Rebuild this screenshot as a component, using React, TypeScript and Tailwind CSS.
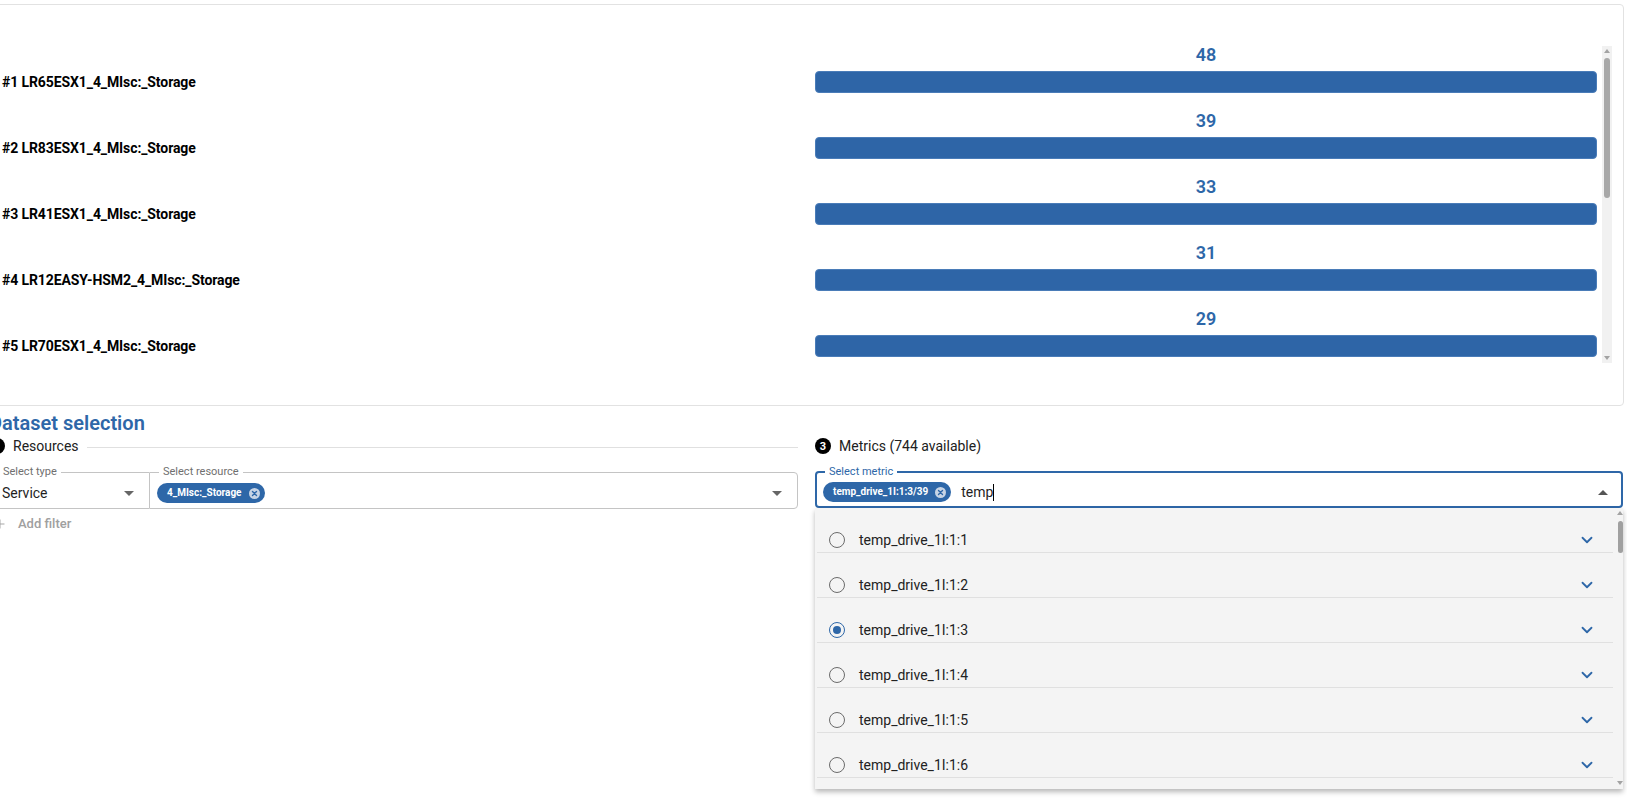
import { ChevronDown, Plus } from "lucide-react";

const BLUE = "#2e67a8";

const chartRows = [
  { name: "LR65ESX1_4_MIsc:_Storage", value: 48 },
  { name: "LR83ESX1_4_MIsc:_Storage", value: 39 },
  { name: "LR41ESX1_4_MIsc:_Storage", value: 33 },
  { name: "LR12EASY-HSM2_4_MIsc:_Storage", value: 31 },
  { name: "LR70ESX1_4_MIsc:_Storage", value: 29 },
  { name: "LR22ESX1_4_MIsc:_Storage", value: 27 },
  { name: "LR09ESX1_4_MIsc:_Storage", value: 24 },
];

const metrics = [
  "temp_drive_1I:1:1",
  "temp_drive_1I:1:2",
  "temp_drive_1I:1:3",
  "temp_drive_1I:1:4",
  "temp_drive_1I:1:5",
  "temp_drive_1I:1:6",
  "temp_drive_1I:1:7",
];

function TriDown() {
  return <span className="block w-0 h-0 border-x-[5px] border-x-transparent border-t-[5px] border-t-[#666666]" />;
}

function TriUp() {
  return <span className="block w-0 h-0 border-x-[5px] border-x-transparent border-b-[5px] border-b-[#555555]" />;
}

// petit chip bleu avec bouton de suppression
function Chip({ label }: { label: string }) {
  return (
    <span className="-ml-[2px] inline-flex items-center h-[20px] rounded-full bg-[#2e67a8] pl-[10px] pr-[5px] gap-[7px] text-white text-[10px] font-bold leading-none">
      {label}
      <span className="w-[11px] h-[11px] rounded-full bg-[#c7d4e5] flex items-center justify-center">
        <svg width="7" height="7" viewBox="0 0 7 7">
          <path d="M1.5 1.5 L5.5 5.5 M5.5 1.5 L1.5 5.5" stroke={BLUE} strokeWidth="1.4" strokeLinecap="round" />
        </svg>
      </span>
    </span>
  );
}

function StepBadge({ n }: { n: number }) {
  return (
    <span className="w-[16px] h-[16px] shrink-0 rounded-full bg-black text-white text-[11px] font-bold leading-none flex items-center justify-center">
      {n}
    </span>
  );
}

function Radio({ checked }: { checked: boolean }) {
  if (checked) {
    return (
      <span className="w-[16px] h-[16px] shrink-0 rounded-full border-[1.5px] border-[#2e67a8] flex items-center justify-center">
        <span className="w-[8px] h-[8px] rounded-full bg-[#2e67a8]" />
      </span>
    );
  }
  return <span className="w-[16px] h-[16px] shrink-0 rounded-full border-[1.5px] border-[#6b6b6b]" />;
}

export default function App() {
  return (
    <div className="min-h-screen w-full overflow-hidden bg-white font-['Roboto',sans-serif] text-[#212121]">
      <div className="-ml-[11px] w-[1634px] pt-[4px]">
        {/* carte du graphique */}
        <div className="w-[1635px] h-[402px] rounded-[4px] border border-[#e2e2e2] pt-[39px] pr-[11px] flex gap-[5px]">
          <div className="flex-1 h-[321px] overflow-hidden">
            {chartRows.map((row, i) => (
              <div key={row.name} className="grid grid-cols-[825px_1fr] h-[66px]">
                <div className="pl-[12px] pt-[27px]">
                  <div className="h-[22px] flex items-center text-[14px] font-bold text-black tracking-[-0.1px]">
                    #{i + 1} {row.name}
                  </div>
                </div>
                <div className="flex flex-col">
                  <div className="h-[24px] leading-[21px] text-center text-[18px] font-semibold text-[#2e67a8]">
                    {row.value}
                  </div>
                  <div className="mt-[3px] h-[22px] rounded-[4px] bg-[#2e65a7] border border-[#4a7cb8]" />
                </div>
              </div>
            ))}
          </div>
          {/* barre de défilement */}
          <div className="w-[10px] h-[317px] mt-[2px] bg-[#f1f1f1] flex flex-col items-center">
            <div className="pt-[3px]">
              <span className="block w-0 h-0 border-x-[3px] border-x-transparent border-b-[4px] border-b-[#a3a3a3]" />
            </div>
            <div className="mt-[5px] w-[6px] h-[140px] rounded-full bg-[#a8a8a8]" />
            <div className="flex-1" />
            <div className="pb-[3px]">
              <span className="block w-0 h-0 border-x-[3px] border-x-transparent border-t-[4px] border-t-[#a3a3a3]" />
            </div>
          </div>
        </div>

        <h2 className="mt-[5px] text-[20px] leading-[24px] font-semibold text-[#2e67a8]">Dataset selection</h2>

        <div className="mt-[1px] grid grid-cols-[809px_808px] gap-x-[17px]">
          {/* colonne ressources */}
          <div>
            <div className="h-[20px] flex items-center text-[14px]">
              <StepBadge n={1} />
              <span className="ml-[8px]">Resources</span>
              <span className="ml-[8px] mt-[3px] flex-1 h-px bg-[#e0e0e0]" />
            </div>
            <div className="mt-[9px] flex">
              <fieldset className="w-[160px] rounded-l-[4px] border border-r-0 border-[#c4c4c4] pl-[9px] pr-[15px]">
                <legend className="px-[4px] text-[11px] leading-[14px] text-[#6f6f6f]">Select type</legend>
                <div className="h-[29px] pb-[1px] flex items-center justify-between pl-[3px] text-[14px] text-[#1f1f1f]">
                  <span>Service</span>
                  <TriDown />
                </div>
              </fieldset>
              <fieldset className="flex-1 rounded-r-[4px] border border-[#c4c4c4] pl-[9px] pr-[15px]">
                <legend className="px-[4px] text-[11px] leading-[14px] text-[#6f6f6f]">Select resource</legend>
                <div className="h-[29px] pb-[1px] flex items-center justify-between">
                  <Chip label="4_MIsc:_Storage" />
                  <TriDown />
                </div>
              </fieldset>
            </div>
            <div className="mt-[5px] h-[20px] pl-[4px] flex items-center gap-[11px] text-[13px] font-medium text-[#a0a0a0]">
              <Plus size={14} strokeWidth={1.6} />
              <span>Add filter</span>
            </div>
          </div>

          {/* colonne métriques */}
          <div>
            <div className="h-[20px] flex items-center text-[14px]">
              <StepBadge n={3} />
              <span className="ml-[8px]">Metrics (744 available)</span>
            </div>
            <div className="relative mt-[9px]">
              <fieldset className="rounded-[4px] border-2 border-[#2e67a8] pl-[8px] pr-[13px]">
                <legend className="px-[4px] text-[11px] leading-[14px] text-[#2e67a8]">Select metric</legend>
                <div className="h-[27px] pb-[1px] flex items-center">
                  <Chip label="temp_drive_1I:1:3/39" />
                  <span className="ml-[10px] text-[14px] text-[#1f1f1f]">temp</span>
                  <span className="w-px h-[17px] bg-black" />
                  <span className="flex-1" />
                  <TriUp />
                </div>
              </fieldset>

              {/* liste déroulante */}
              <div className="absolute top-full left-0 right-0 h-[281px] overflow-hidden bg-[#f4f4f4] shadow-[0_3px_5px_rgba(0,0,0,0.28)] flex gap-[4px] pl-[2px] z-10">
                <div className="flex-1">
                  {metrics.map((m) => (
                    <div key={m} className="h-[45px] pt-[20px] border-b border-[#e0e0e0]">
                      <div className="h-[24px] flex items-center pl-[12px] pr-[17px]">
                        <Radio checked={m === "temp_drive_1I:1:3"} />
                        <span className="ml-[14px] flex-1 text-[14px] text-[#222222]">{m}</span>
                        <ChevronDown size={18} strokeWidth={2.4} color={BLUE} />
                      </div>
                    </div>
                  ))}
                </div>
                <div className="w-[6px] flex flex-col items-center">
                  <div className="pt-[3px]">
                    <span className="block w-0 h-0 border-x-[3px] border-x-transparent border-b-[4px] border-b-[#a3a3a3]" />
                  </div>
                  <div className="mt-[6px] w-[5px] h-[32px] rounded-full bg-[#a0a0a0]" />
                  <div className="flex-1" />
                  <div className="pb-[4px]">
                    <span className="block w-0 h-0 border-x-[3px] border-x-transparent border-t-[4px] border-t-[#a3a3a3]" />
                  </div>
                </div>
              </div>
            </div>
          </div>
        </div>
      </div>
    </div>
  );
}
